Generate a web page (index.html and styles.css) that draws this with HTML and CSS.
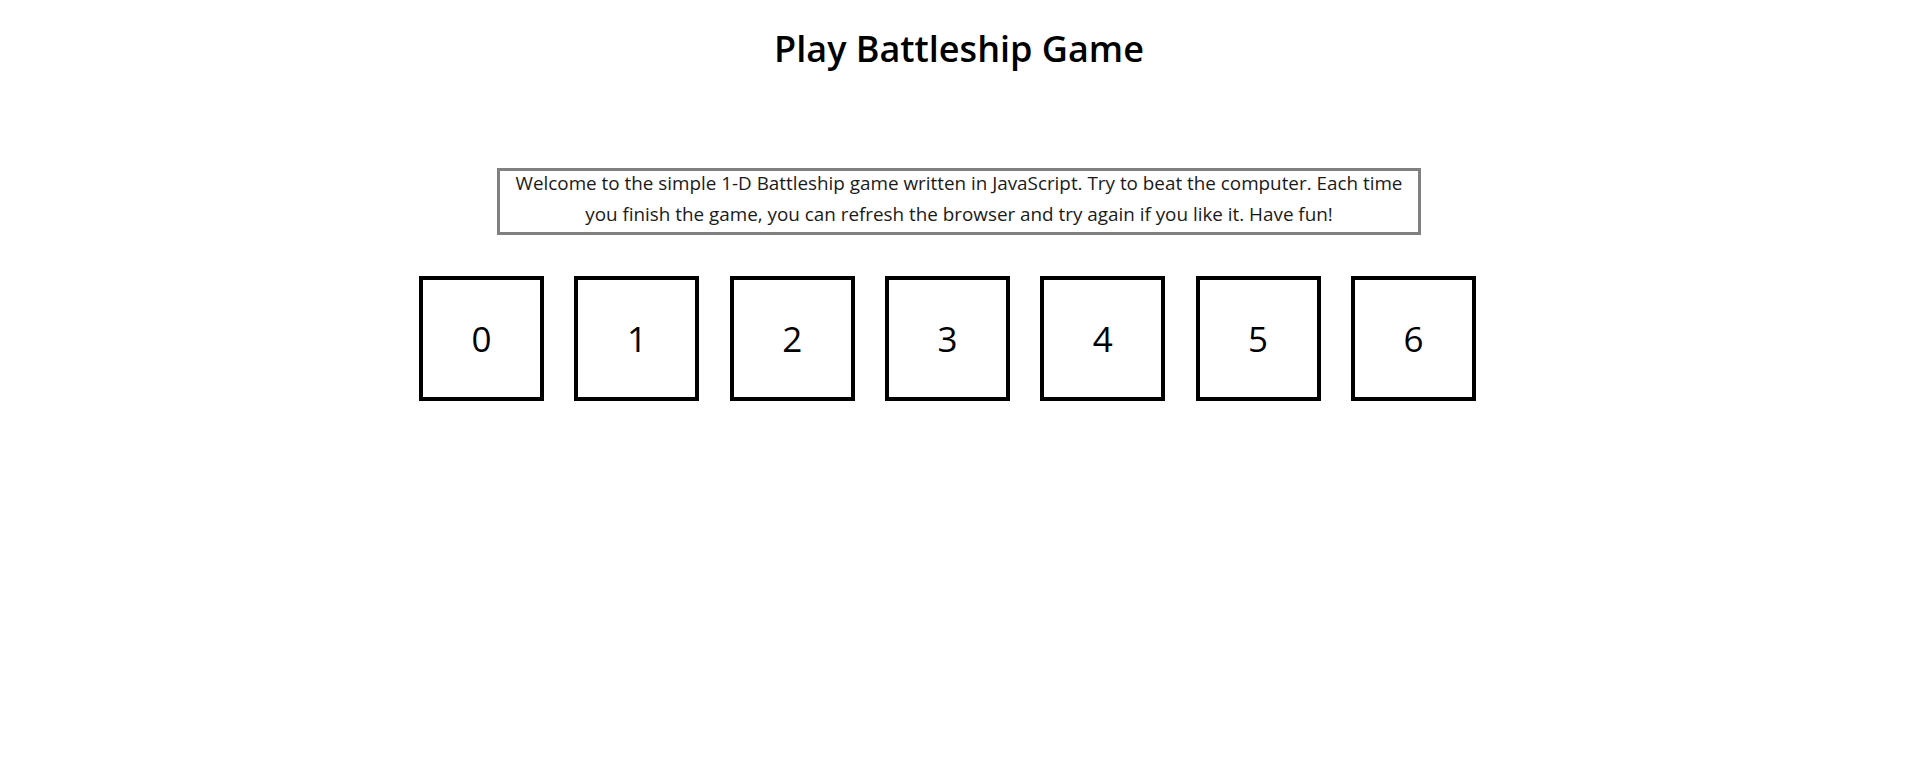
FILE: index.html
```html
<!DOCTYPE html>
<html lang="en">
<head>
<meta charset="utf-8">
<title>Play Battleship Game</title>
<link rel="stylesheet" href="styles.css">
</head>
<body>
  <h1 class="title">Play Battleship Game</h1>
  <div class="intro-wrap">
    <div class="intro">
      <p class="intro-text">Welcome to the simple 1-D Battleship game written in JavaScript. Try to beat the computer. Each time you finish the game, you can refresh the browser and try again if you like it. Have fun!</p>
    </div>
  </div>
  <div class="board">
    <div class="cell">0</div>
    <div class="cell">1</div>
    <div class="cell">2</div>
    <div class="cell">3</div>
    <div class="cell">4</div>
    <div class="cell">5</div>
    <div class="cell">6</div>
  </div>
</body>
</html>
```

FILE: styles.css
```css
html, body {
  margin: 0;
  padding: 0;
  background: #ffffff;
}

body {
  font-family: "Open Sans", "Liberation Sans", sans-serif;
  color: #000;
}

.title {
  margin: 24px 0 0 0;
  text-align: center;
  font-size: 36px;
  font-weight: 600;
  line-height: 50px;
}

.intro-wrap {
  display: flex;
  justify-content: center;
  margin-top: 94px;
}

.intro {
  width: 900px;
  padding: 0 9px 1.5px;
  border: 3px solid #808080;
}

.intro-text {
  margin: -3.5px 0 0;
  text-align: center;
  font-size: 18.85px;
  line-height: 31.5px;
  color: #1a1a1a;
}

.board {
  display: flex;
  justify-content: center;
  gap: 30.3px;
  padding-right: 23px;
  margin-top: 41px;
}

.cell {
  width: 117px;
  height: 117px;
  border: 4px solid #000;
  display: flex;
  align-items: center;
  justify-content: center;
  font-size: 35px;
  color: #000;
}
```
